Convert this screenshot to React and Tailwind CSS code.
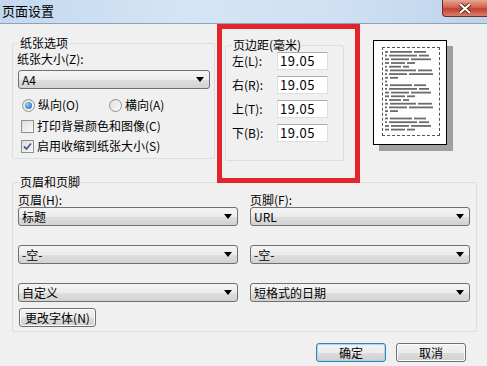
import React from "react";

const cjk = "font-['Noto_Sans_CJK_SC','Noto_Sans',sans-serif]";

// fake text lines inside the page preview
const previewLines = [
  [3, 22, 12], [2, 28, 10], [4, 18, 20], [4, 14, 8], [2, 12, 6],
  [3, 26, 14], [2, 18, 24], [3, 8], [2], [3, 22, 12], [2, 28, 10],
  [4, 18, 20], [4, 14, 8], [2, 12, 6], [3, 26, 14], [2, 18, 24],
  [3, 8], [2], [3, 22, 12], [2, 28, 10], [4, 18, 20], [4, 14, 8],
];

function Select({ value, className = "" }) {
  return (
    <div
      className={`flex h-[19px] items-center justify-between rounded-[3px] border border-[#707070] bg-[linear-gradient(#f4f4f4,#ececec_50%,#dfdfdf_51%,#d2d2d2)] pl-[3px] pr-[5px] text-[12px] leading-[14px] text-black ${className}`}
    >
      <span>{value}</span>
      <svg width="8" height="5" viewBox="0 0 8 5">
        <path d="M0 0h8L4 5z" fill="#000" />
      </svg>
    </div>
  );
}

function Button({ children, className = "", primary }) {
  return (
    <div
      className={`flex items-center justify-center rounded-[3px] border ${
        primary ? "border-[#3c7fb1] shadow-[inset_0_0_0_1px_#a8d8f0]" : "border-[#707070] shadow-[inset_0_0_0_1px_#fcfcfc]"
      } bg-[linear-gradient(#f2f2f2,#ebebeb_50%,#dddddd_51%,#cfcfcf)] text-[12px] leading-[14px] text-black ${className}`}
    >
      {children}
    </div>
  );
}

function Radio({ checked, label }) {
  return (
    <div className="flex items-center gap-[3px]">
      <span className="flex h-[13px] w-[13px] items-center justify-center rounded-full border border-[#8e8f8f] bg-[linear-gradient(135deg,#e0e0e0,#fafafa)]">
        {checked && (
          <span className="h-[7px] w-[7px] rounded-full bg-[radial-gradient(circle_at_35%_35%,#8ad0ff,#1d5fa9)]" />
        )}
      </span>
      <span>{label}</span>
    </div>
  );
}

function Checkbox({ checked, label }) {
  return (
    <div className="flex items-center gap-[3px]">
      <span className="flex h-[13px] w-[13px] items-center justify-center border border-[#8e8f8f] bg-[linear-gradient(135deg,#dcdcdc,#fbfbfb)]">
        {checked && (
          <svg width="9" height="9" viewBox="0 0 9 9">
            <path d="M1 4.5l2.5 2.5L8 1.5" stroke="#4a5f97" strokeWidth="1.8" fill="none" />
          </svg>
        )}
      </span>
      <span>{label}</span>
    </div>
  );
}

function MarginRow({ label }) {
  return (
    <div className="flex h-[18px] items-center">
      <span className="w-[45px]">{label}</span>
      <div className="flex h-[18px] w-[51px] items-center border border-[#dbdfe6] border-t-[#abadb3] bg-white pl-[2px] text-[13px] tracking-[0.5px] text-black">
        19.05
      </div>
    </div>
  );
}

export default function App() {
  return (
    <div className={`h-[366px] w-[487px] overflow-hidden bg-[#f0f0f0] text-[12px] text-black ${cjk}`}>
      {/* title bar */}
      <div className="flex h-[24px] items-start justify-between border-b border-[#8da2bb] bg-[linear-gradient(90deg,#c3d8ef,#d6e5f5_40%,#cfe0f3_70%,#bdd3ec)]">
        <span className="pl-[2px] pt-[3px] text-[13px] leading-[16px]">页面设置</span>
        <div className="flex h-[17px] w-[45px] items-center justify-center rounded-bl-[4px] border border-t-0 border-r-0 border-[#6b2e24] bg-[linear-gradient(#e6a593,#d2654f_45%,#c3412c_55%,#d8806e)]">
          <svg width="14" height="11" viewBox="0 0 14 11">
            <path d="M2 1l10 9M12 1L2 10" stroke="#5a1f16" strokeWidth="4" />
            <path d="M2 1l10 9M12 1L2 10" stroke="#fff" strokeWidth="2.2" />
          </svg>
        </div>
      </div>

      {/* top row */}
      <div className="flex items-start">
        <fieldset className="ml-3 mt-[11px] h-[124px] w-[203px] rounded-[2px] border border-[#d5dfe5]">
          <legend className="ml-[6px] px-[1px] leading-[16px]">纸张选项</legend>
          <div className="pl-1 leading-[16px]">纸张大小(Z):</div>
          <Select value="A4" className="ml-[5px] mt-[3px] w-[192px]" />
          <div className="ml-[9px] mt-[8px] flex h-[16px] items-center leading-[16px]">
            <div className="w-[87px]">
              <Radio checked label="纵向(O)" />
            </div>
            <Radio label="横向(A)" />
          </div>
          <div className="ml-[8px] mt-[5px] h-[16px] leading-[16px]">
            <Checkbox label="打印背景颜色和图像(C)" />
          </div>
          <div className="ml-[8px] mt-[4px] h-[16px] leading-[16px]">
            <Checkbox checked label="启用收缩到纸张大小(S)" />
          </div>
        </fieldset>

        <div className="ml-[2px] h-[159px] w-[143px] border-[5px] border-[#e0262c]">
          <fieldset className="ml-[3px] mt-[8px] h-[124px] w-[119px] rounded-[2px] border border-[#d5dfe5]">
            <legend className="ml-[6px] px-[1px] leading-[16px]">页边距(毫米)</legend>
            <div className="-mt-[1px] flex flex-col gap-[6px] pl-[6px]">
              <MarginRow label="左(L):" />
              <MarginRow label="右(R):" />
              <MarginRow label="上(T):" />
              <MarginRow label="下(B):" />
            </div>
          </fieldset>
        </div>

        <div className="ml-[13px] mt-[16px] h-[105px] w-[74px] border border-black bg-white p-[6px_6px_8px_8px] shadow-[6px_6px_0_#a0a0a0]">
          <div className="h-full w-full border border-dashed border-[#555]">
            <svg width="56" height="87" viewBox="0 0 56 87">
              {previewLines.map((words, i) => {
                let x = 2;
                return words.map((w, j) => {
                  const el = (
                    <rect key={`${i}-${j}`} x={x} y={3 + i * 3.7} width={w} height="1.8" fill="#6b6b6b" />
                  );
                  x += w + 2;
                  return el;
                });
              })}
            </svg>
          </div>
        </div>
      </div>

      {/* header / footer */}
      <fieldset className="-mt-[7px] ml-3 h-[156px] w-[465px] rounded-[2px] border border-[#d5dfe5]">
        <legend className="ml-[6px] px-[1px] leading-[12px]">页眉和页脚</legend>
        <div className="grid grid-cols-[220px_220px] gap-x-[12px] pl-[5px]">
          <div className="pt-[6px] leading-[12px]">页眉(H):</div>
          <div className="pt-[6px] leading-[12px]">页脚(F):</div>
          <Select value="标题" className="mt-[1px]" />
          <Select value="URL" className="mt-[1px]" />
          <Select value="-空-" className="mt-[19px]" />
          <Select value="-空-" className="mt-[19px]" />
          <Select value="自定义" className="mt-[19px]" />
          <Select value="短格式的日期" className="mt-[19px]" />
        </div>
        <Button className="ml-[6px] mt-[6px] h-[19px] w-[77px]">更改字体(N)</Button>
      </fieldset>

      {/* dialog buttons */}
      <div className="mt-[11px] flex justify-end gap-[10px] pr-[21px]">
        <Button primary className="h-[19px] w-[70px]">确定</Button>
        <Button className="h-[19px] w-[70px]">取消</Button>
      </div>
    </div>
  );
}
